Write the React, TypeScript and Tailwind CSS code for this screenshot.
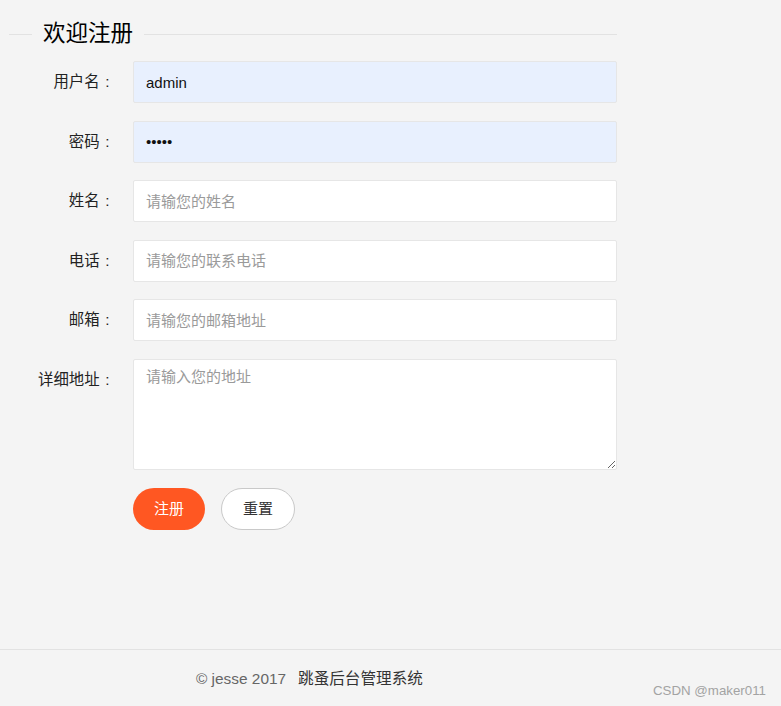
import React from "react";

const font = { fontFamily: '"Liberation Sans", "Noto Sans CJK SC", sans-serif' };

function Label({ text }: { text: string }) {
  return (
    <div className="w-[133px] shrink-0 pr-[18px] text-right text-[15.4px] leading-[42px] text-[#222]">
      {text}
      <span className="inline-block w-[15.4px] text-center">:</span>
    </div>
  );
}

function Row({ label, children }: { label: string; children: React.ReactNode }) {
  return (
    <div className="flex mb-[17.6px]">
      <Label text={label} />
      <div className="w-[484px]">{children}</div>
    </div>
  );
}

const inputCls =
  "block w-full h-[42px] border border-[#e6e6e6] rounded-[2px] pl-[12px] text-[15px] outline-none placeholder:text-[#9a9a9a] text-[#111]";

export default function App() {
  return (
    <div className="h-[706px] bg-[#f4f4f4] flex flex-col relative overflow-hidden" style={font}>
      <div className="flex-1">
        <div className="mt-[22px] ml-[9px] w-[608px] flex items-center h-[24px]">
          <div className="w-[23px] h-px bg-[#e2e2e2]" />
          <div className="px-[11px] text-[22.5px] leading-[24px] text-black">欢迎注册</div>
          <div className="flex-1 h-px bg-[#e2e2e2]" />
        </div>
        <div className="mt-[15px]">
          <Row label="用户名">
            <input className={inputCls + " bg-[#e8f0fe]"} defaultValue="admin" readOnly />
          </Row>
          <Row label="密码">
            <input type="password" className={inputCls + " bg-[#e8f0fe]"} defaultValue="12345" readOnly />
          </Row>
          <Row label="姓名">
            <input className={inputCls + " bg-white"} placeholder="请输您的姓名" />
          </Row>
          <Row label="电话">
            <input className={inputCls + " bg-white"} placeholder="请输您的联系电话" />
          </Row>
          <Row label="邮箱">
            <input className={inputCls + " bg-white"} placeholder="请输您的邮箱地址" />
          </Row>
          <div className="flex">
            <Label text="详细地址" />
            <textarea
              className="block w-[484px] h-[111px] border border-[#e6e6e6] rounded-[2px] bg-white pl-[12px] pt-[5px] text-[15px] leading-[24px] outline-none placeholder:text-[#9a9a9a]"
              placeholder="请输入您的地址"
            />
          </div>
          <div className="flex gap-[16px] ml-[133px] mt-[18px]">
            <button className="w-[72px] h-[42px] rounded-full bg-[#ff5722] text-white text-[15px]">注册</button>
            <button className="w-[74px] h-[42px] rounded-full bg-white border border-[#c9c9c9] text-[#333] text-[15px]">重置</button>
          </div>
        </div>
      </div>
      <div className="h-[57px] border-t border-[#e2e2e2] pt-[18px] pl-[196px]">
        <div className="text-[15.4px] leading-[22px]">
          <span className="text-[#666]">© jesse 2017</span>
          <span className="text-[#333] ml-[12px] text-[15.6px]">跳蚤后台管理系统</span>
        </div>
      </div>
      <div className="absolute right-[15px] bottom-[7px] text-[13.3px] leading-[16px] text-[#a3a3a3]">CSDN @maker011</div>
    </div>
  );
}
